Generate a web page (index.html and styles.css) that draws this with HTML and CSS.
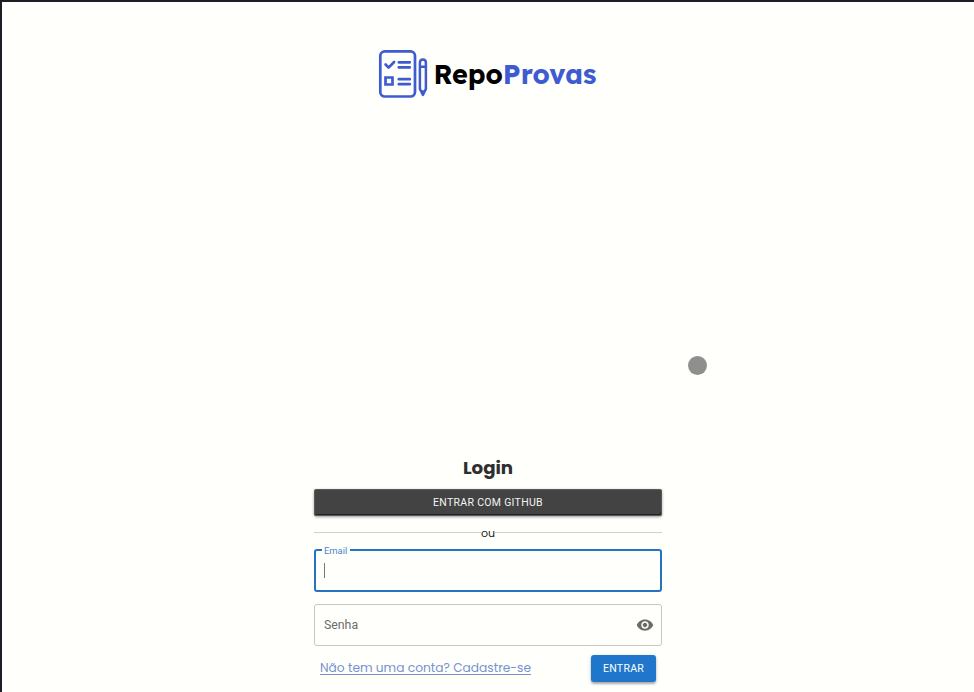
FILE: index.html
```html
<!DOCTYPE html>
<html lang="pt-BR">
<head>
<meta charset="utf-8">
<title>RepoProvas</title>
<link rel="stylesheet" href="styles.css">
</head>
<body>
<main class="page">
  <header class="logo">
    <svg class="logo-icon" width="50" height="50" viewBox="0 0 50 50" fill="none" stroke="#3f5bd0" stroke-width="2.7" stroke-linecap="round" stroke-linejoin="round">
      <rect x="2.3" y="2.3" width="34.7" height="45.2" rx="4.5"/>
      <path d="M7.6 15.5l3 3.1 5.5-5.6M20.8 13.3h11M20.8 18.4h11M20.8 30.2h11M20.8 35.2h11"/>
      <path d="M7.5 28.5h7v7h-7z" stroke-linejoin="miter"/>
      <path d="M41.9 13.8c0-4.5 6-4.5 6 0v26.1l-3 6-3-6zM42 17.7h5.8M43.2 42.5h3.4" stroke-width="2.5"/>
    </svg>
    <h1 class="brand"><span class="repo">Repo</span><span class="provas">Provas</span></h1>
  </header>
  <form class="login">
    <h2 class="title"><span>Login</span></h2>
    <button class="btn github" type="button">ENTRAR COM GITHUB</button>
    <div class="divider"><span>ou</span></div>
    <div class="field focused"><span class="label">Email</span><span class="caret"></span></div>
    <div class="field">
      <span class="placeholder">Senha</span>
      <svg class="eye" width="18" height="18" viewBox="0 0 24 24" fill="#6b6b6b"><path d="M12 4.5C7 4.5 2.73 7.61 1 12c1.73 4.39 6 7.5 11 7.5s9.27-3.11 11-7.5c-1.73-4.39-6-7.5-11-7.5zM12 17c-2.76 0-5-2.24-5-5s2.24-5 5-5 5 2.24 5 5-2.24 5-5 5zm0-8c-1.66 0-3 1.34-3 3s1.34 3 3 3 3-1.34 3-3-1.34-3-3-3z"/></svg>
    </div>
    <div class="actions">
      <a class="signup" href="#">Não tem uma conta? Cadastre-se</a>
      <button class="btn enter" type="button">ENTRAR</button>
    </div>
  </form>
  <span class="pointer"></span>
</main>
</body>
</html>
```
FILE: styles.css
```css
* { box-sizing: border-box; }
body { margin: 0; background: #fffffc; font-family: Roboto, sans-serif; }
.page {
  position: relative;
  height: 692px;
  overflow: hidden;
  border: solid #1e1d24;
  border-width: 2px 0 0 2px;
  display: flex;
  flex-direction: column;
  align-items: center;
  justify-content: space-between;
  padding: 47px 0 10px;
}
.logo { display: flex; align-items: center; gap: 5.5px; width: 220px; }
.logo-icon { flex: none; }
.brand {
  margin: 0;
  font: 700 27px/50px Lexend, Inter, sans-serif;
  white-space: nowrap;
}
.repo { color: #000; }
.provas { color: #3f5bd0; }
.login { width: 348px; display: flex; flex-direction: column; }
.title {
  margin: 0 0 8px;
  font: 700 18.2px/26px Poppins, Inter, sans-serif;
  text-align: center;
  color: #2f2f2f;
}
.btn {
  border: 0;
  padding: 0;
  border-radius: 3px;
  color: #fff;
  font: 400 10.5px/27px Roboto, sans-serif;
  letter-spacing: .3px;
  box-shadow: 0 2px 2px rgba(0,0,0,.25), 0 1px 4px rgba(0,0,0,.16);
}
.github {
  height: 27px;
  background: #424342;
  color: #f3f3f3;
  box-shadow: inset 0 0 0 1px #5a5a5a, inset -1px -2px 0 #222, 0 1px 3px rgba(0,0,0,.4);
}
.divider {
  display: flex;
  align-items: center;
  height: 17px;
  margin: 8px 0;
  font: 400 11px/17px Poppins, Inter, sans-serif;
  color: #222;
}
.divider span { padding-top: 2px; }
.divider::before, .divider::after { content: ""; flex: 1; height: 1px; background: #cfcfcc; }
.field {
  position: relative;
  height: 42px;
  border: 1px solid #c6c6c3;
  border-radius: 3px;
  display: flex;
  align-items: center;
  justify-content: space-between;
  padding: 0 7px 0 9px;
}
.focused { height: 43px; border: 2px solid #2474c2; margin-bottom: 12px; padding-left: 8px; }
.label {
  position: absolute;
  top: -7px;
  left: 6px;
  padding: 0 3px 0 2px;
  background: #fffffc;
  color: #4886c8;
  font-size: 9.4px;
  line-height: 13px;
}
.caret { width: 1px; height: 15px; background: #777; }
.placeholder { font-size: 12.3px; color: #6b6b6b; }
.actions { display: flex; align-items: center; justify-content: space-between; margin-top: 8px; padding: 0 6px; height: 28px; }
.signup {
  font: 400 12.23px/20px Poppins, Inter, sans-serif;
  color: #7592cf;
  text-decoration: underline;
  text-underline-offset: 2px;
  white-space: nowrap;
}
.enter { width: 65px; height: 27px; background: #2076cb; }
.pointer {
  position: absolute;
  left: 686px;
  top: 354px;
  width: 19px;
  height: 19px;
  border-radius: 50%;
  background: #8f908d;
}
```
